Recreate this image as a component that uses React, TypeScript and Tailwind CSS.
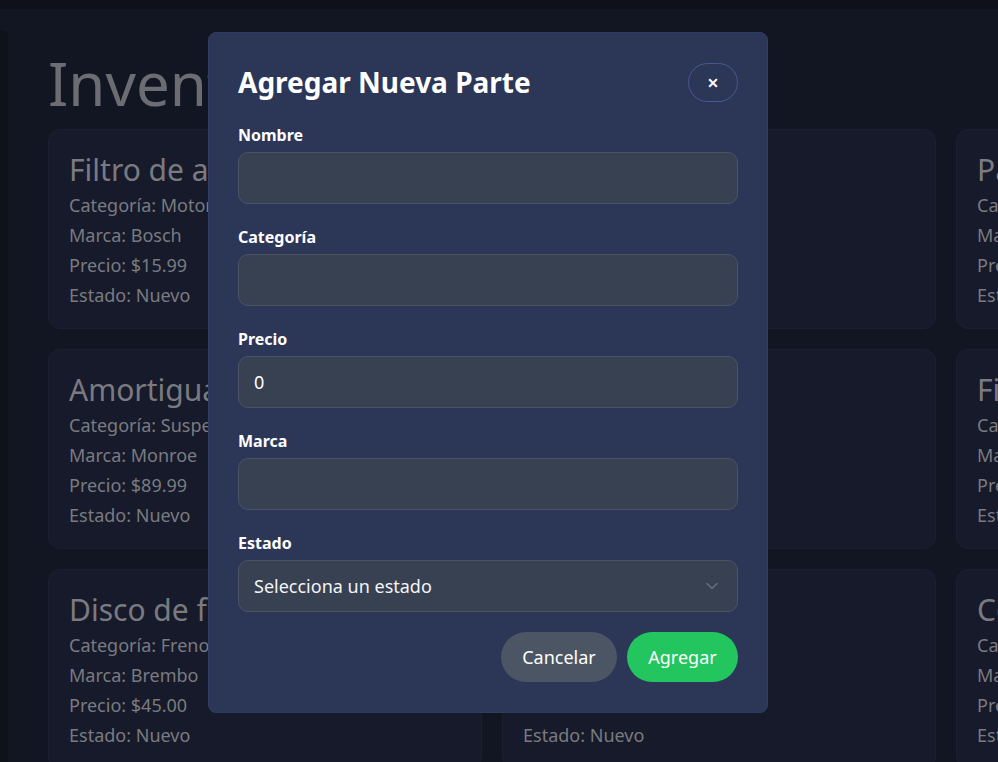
import { ChevronDown } from 'lucide-react';

type Part = {
  name: string;
  category: string;
  brand: string;
  price: string;
  state: string;
};

const parts: Part[] = [
  { name: 'Filtro de aceite', category: 'Motor', brand: 'Bosch', price: '15.99', state: 'Nuevo' },
  { name: 'Bujía', category: 'Motor', brand: 'NGK', price: '8.50', state: 'Nuevo' },
  { name: 'Pastillas de freno', category: 'Frenos', brand: 'Brembo', price: '35.00', state: 'Nuevo' },
  { name: 'Amortiguador', category: 'Suspensión', brand: 'Monroe', price: '89.99', state: 'Nuevo' },
  { name: 'Batería', category: 'Eléctrico', brand: 'ACDelco', price: '120.00', state: 'Nuevo' },
  { name: 'Filtro de aire', category: 'Motor', brand: 'Mann', price: '12.99', state: 'Nuevo' },
  { name: 'Disco de freno', category: 'Frenos', brand: 'Brembo', price: '45.00', state: 'Nuevo' },
  { name: 'Radiador', category: 'Motor', brand: 'Denso', price: '150.00', state: 'Nuevo' },
  { name: 'Correa de distribución', category: 'Motor', brand: 'Gates', price: '60.00', state: 'Nuevo' },
];

function PartCard({ part }: { part: Part }) {
  return (
    <div className="h-[200px] overflow-hidden rounded-xl border border-[#1b2031] bg-[#161a2a] p-5 text-[#7a7b80]">
      <h2 className="truncate text-[30px] leading-[40px]">{part.name}</h2>
      <p className="text-lg leading-[30px]">Categoría: {part.category}</p>
      <p className="text-lg leading-[30px]">Marca: {part.brand}</p>
      <p className="text-lg leading-[30px]">Precio: ${part.price}</p>
      <p className="text-lg leading-[30px]">Estado: {part.state}</p>
    </div>
  );
}

function Field({ label, value }: { label: string; value?: string }) {
  return (
    <label className="flex flex-col gap-[5px]">
      <span className="text-base leading-6 font-bold text-white">{label}</span>
      <input
        type="text"
        defaultValue={value}
        className="h-[52px] rounded-[10px] border border-[#4a5263] bg-[#374151] px-[15px] text-lg text-white outline-none"
      />
    </label>
  );
}

export default function App() {
  return (
    <div
      className="relative h-screen w-screen overflow-hidden bg-[#0e1119]"
      style={{ fontFamily: '"Noto Sans", "Open Sans", sans-serif' }}
    >
      <div className="mt-[9px] flex h-full bg-[#121622]">
        <div className="mt-[21px] w-2 shrink-0 rounded-tr-md bg-[#0f1219]" />
        <main className="px-10 pt-[44px]">
          <h1 className="mb-[16px] text-[60px] leading-[60px] text-[#6c6d72]">Inventario</h1>
          <div className="grid grid-cols-[434px_434px_434px] gap-5">
            {parts.map(p => (
              <PartCard key={p.name} part={p} />
            ))}
          </div>
        </main>
      </div>

      <div className="absolute top-8 left-[208px] w-[560px] rounded-lg border border-[#323c62] bg-[#2c3657] px-[29px] pt-[30px] pb-[30px]">
        <div className="mb-[21px] flex items-center justify-between">
          <h2 className="text-[28px] leading-[39px] font-bold text-white">Agregar Nueva Parte</h2>
          <button className="flex h-[39px] w-[50px] items-center justify-center rounded-full border border-[#4a5894] bg-[#2c3657] text-white">
            <span className="text-xl leading-none font-semibold">×</span>
          </button>
        </div>

        <div className="flex flex-col gap-[21px]">
          <Field label="Nombre" />
          <Field label="Categoría" />
          <Field label="Precio" value="0" />
          <Field label="Marca" />
          <label className="flex flex-col gap-[5px]">
            <span className="text-base leading-6 font-bold text-white">Estado</span>
            <div className="relative">
              <select className="h-[52px] w-full appearance-none rounded-[10px] border border-[#4a5263] bg-[#374151] px-[15px] text-lg text-[#f3f4f6] outline-none">
                <option>Selecciona un estado</option>
                <option>Nuevo</option>
                <option>Usado</option>
              </select>
              <ChevronDown
                size={20}
                strokeWidth={1.5}
                className="pointer-events-none absolute top-[16px] right-[16px] text-[#6b7280]"
              />
            </div>
          </label>
        </div>

        <div className="mt-5 flex justify-end gap-[10px]">
          <button className="h-[50px] w-[116px] rounded-full bg-[#4b5563] text-lg text-white">Cancelar</button>
          <button className="h-[50px] w-[111px] rounded-full bg-[#22c55e] text-lg text-white">Agregar</button>
        </div>
      </div>
    </div>
  );
}
